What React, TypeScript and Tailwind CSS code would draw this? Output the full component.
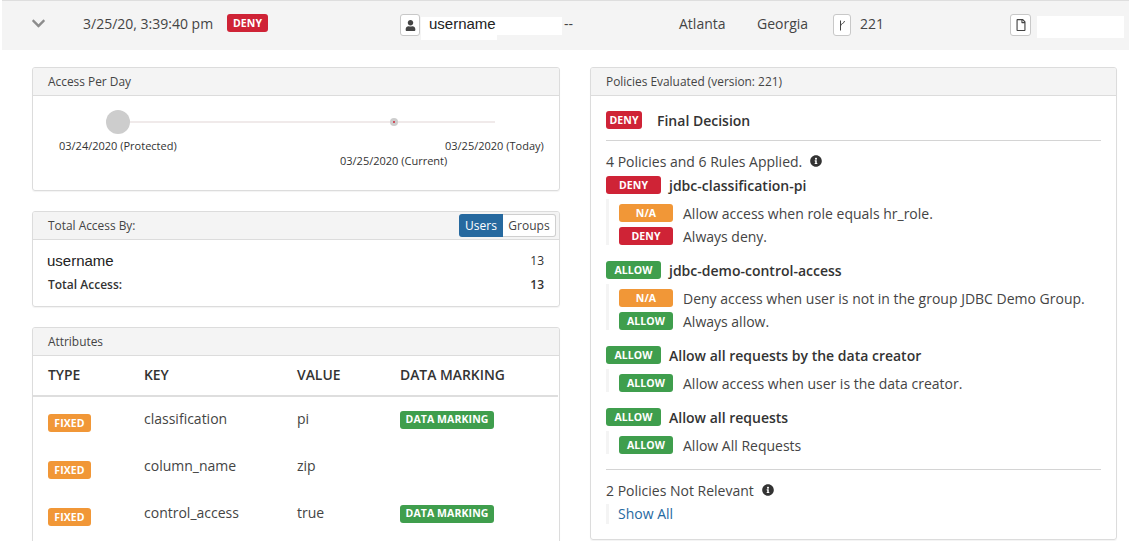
import { FaChevronDown, FaInfoCircle, FaRegFile, FaUser } from "react-icons/fa";

const badgeColors = {
  DENY: "bg-[#cf2336]",
  ALLOW: "bg-[#3f9e4d]",
  "N/A": "bg-[#f19737]",
  FIXED: "bg-[#f19737]",
  "DATA MARKING": "bg-[#3f9e4d]",
};

type BadgeLabel = keyof typeof badgeColors;

const Badge = ({ label, width }: { label: BadgeLabel; width: string }) => (
  <span
    className={`${badgeColors[label]} ${width} flex h-[18px] shrink-0 items-center justify-center rounded-[3px] text-[10.5px] leading-none font-bold tracking-[0.1px] text-white`}
  >
    {label}
  </span>
);

const Panel = ({
  title,
  action,
  className,
  children,
}: {
  title: string;
  action?: React.ReactNode;
  className?: string;
  children: React.ReactNode;
}) => (
  <section
    className={`overflow-hidden rounded-[3px] border border-[#dcdcdc] shadow-[0_1px_1px_rgba(0,0,0,0.05)] ${className ?? ""}`}
  >
    <div className="flex h-[28px] items-center justify-between border-b border-[#dcdcdc] bg-[#f4f4f4] pr-[3px] pl-[15px] text-[11.9px] text-[#444]">
      <span>{title}</span>
      {action}
    </div>
    {children}
  </section>
);

const IconBox = ({ className, children }: { className: string; children: React.ReactNode }) => (
  <span
    className={`mt-[4px] flex h-[22px] items-center justify-center rounded-[3px] border border-[#c8c8c8] bg-white text-[#444] ${className}`}
  >
    {children}
  </span>
);

const Policy = ({ label, name, width }: { label: BadgeLabel; name: string; width: string }) => (
  <div className="flex h-[18px] items-center gap-[8px]">
    <Badge label={label} width={width} />
    <span className="text-[14px] font-semibold text-[#333]">{name}</span>
  </div>
);

const Rules = ({ rules }: { rules: { label: BadgeLabel; text: string }[] }) => (
  <div className="mt-[5px] flex flex-col gap-[5px] border-l-[3px] border-[#f4f4f4] pt-[5px] pl-[10px]">
    {rules.map((rule) => (
      <div key={rule.text} className="flex h-[18px] items-center gap-[10px]">
        <Badge label={rule.label} width="w-[54px]" />
        <span className="text-[14px] text-[#444]">{rule.text}</span>
      </div>
    ))}
  </div>
);

const attributes = [
  { key: "classification", value: "pi", marked: true },
  { key: "column_name", value: "zip", marked: false },
  { key: "control_access", value: "true", marked: true },
];

export default function App() {
  return (
    <div className="h-[541px] w-[1129px] overflow-hidden bg-white font-['Open_Sans',sans-serif] text-[#444]">
      <header className="ml-[2px] flex h-[50px] items-center border-t border-[#dedede] bg-[#f4f4f4] pb-[5px] text-[14px]">
        <FaChevronDown className="ml-[29px] text-[15px] text-[#8c8c8c]" />
        <span className="ml-[37px] w-[144px]">3/25/20, 3:39:40 pm</span>
        <Badge label="DENY" width="w-[41px]" />
        <IconBox className="ml-[132px] w-[20px]">
          <FaUser className="text-[11px]" />
        </IconBox>
        <div className="relative mt-[11px] ml-[1px] h-[23px] w-[141px]">
          <span className="absolute top-0 left-0 h-[23px] w-[76px] bg-white pl-[8px] font-['Liberation_Sans',sans-serif] text-[15px] leading-[14px] text-[#222]">
            username
          </span>
          <span className="absolute top-0 left-[76px] h-[18px] w-[65px] bg-white" />
        </div>
        <span className="ml-[2px] w-[115px]">--</span>
        <span className="w-[78px]">Atlanta</span>
        <span className="w-[76px]">Georgia</span>
        <IconBox className="w-[18px]">
          <svg width="8" height="11" viewBox="0 0 8 11" fill="none" stroke="#444" strokeWidth="1">
            <path d="M2.5 0.5v10M6.5 1c0 2.5-4 2.5-4 5" />
          </svg>
        </IconBox>
        <span className="ml-[9px] w-[150px]">221</span>
        <IconBox className="w-[21px]">
          <FaRegFile className="text-[12px]" />
        </IconBox>
        <span className="mt-[8px] ml-[6px] h-[22px] w-[87px] bg-white" />
      </header>

      <main className="mt-[17px] flex gap-[30px] pl-[32px]">
        <div className="flex w-[528px] flex-col gap-[20px]">
          <Panel title="Access Per Day">
            <div className="relative h-[94px] text-[11px] text-[#333]">
              <span className="absolute top-[25px] left-[85px] h-[2px] w-[377px] bg-[#f0eaea]" />
              <span className="absolute top-[14px] left-[73px] size-[24px] rounded-full bg-[#cdcdcd]" />
              <span className="absolute top-[22px] left-[357px] flex size-[8px] items-center justify-center rounded-full bg-[#cdcdcd]">
                <span className="size-[2px] rounded-full bg-[#cf2336]" />
              </span>
              <span className="absolute top-[42px] left-[26px]">03/24/2020 (Protected)</span>
              <span className="absolute top-[42px] left-[412px]">03/25/2020 (Today)</span>
              <span className="absolute top-[57px] left-[307px]">03/25/2020 (Current)</span>
            </div>
          </Panel>

          <Panel
            title="Total Access By:"
            action={
              <div className="flex h-[23px] text-[12px]">
                <span className="flex w-[44px] items-center justify-center rounded-l-[3px] bg-[#26699f] text-white">
                  Users
                </span>
                <span className="flex w-[53px] items-center justify-center rounded-r-[3px] border border-l-0 border-[#cfcfcf] bg-white">
                  Groups
                </span>
              </div>
            }
          >
            <div className="flex h-[66px] flex-col gap-[4px] pt-[11px] pr-[15px] pl-[14px] text-[12px] text-[#333]">
              <div className="flex h-[20px] items-center justify-between">
                <span className="font-['Liberation_Sans',sans-serif] text-[15px] text-[#222]">username</span>
                <span>13</span>
              </div>
              <div className="flex h-[20px] items-center justify-between pl-[1px] font-semibold">
                <span>Total Access:</span>
                <span>13</span>
              </div>
            </div>
          </Panel>

          <Panel title="Attributes" className="h-[300px]">
            <div className="mr-[1px] grid h-[41px] grid-cols-[96px_153px_103px_1fr] items-center border-b-2 border-[#dedede] pl-[15px] text-[13.9px] font-semibold text-[#333]">
              <span>TYPE</span>
              <span>KEY</span>
              <span>VALUE</span>
              <span>DATA MARKING</span>
            </div>
            {attributes.map((attr) => (
              <div
                key={attr.key}
                className="grid h-[47px] grid-cols-[96px_153px_103px_1fr] items-center pl-[15px] text-[14px] text-[#444]"
              >
                <span className="mt-[5px]">
                  <Badge label="FIXED" width="w-[43px]" />
                </span>
                <span className="-mt-[5px]">{attr.key}</span>
                <span className="-mt-[5px]">{attr.value}</span>
                {attr.marked ? (
                  <span className="mb-[2px]">
                    <Badge label="DATA MARKING" width="w-[94px]" />
                  </span>
                ) : (
                  <span />
                )}
              </div>
            ))}
          </Panel>
        </div>

        <Panel title="Policies Evaluated (version: 221)" className="h-[473px] w-[527px]">
          <div className="px-[15px] pt-[15px]">
            <div className="flex h-[18px] items-center gap-[15px]">
              <Badge label="DENY" width="w-[36px]" />
              <span className="text-[14px] font-semibold text-[#333]">Final Decision</span>
            </div>
            <div className="mt-[11px] border-t border-[#d4d4d4] pt-[10px]">
              <div className="flex h-[20px] items-center gap-[8px] text-[14px]">
                4 Policies and 6 Rules Applied.
                <FaInfoCircle className="text-[12px] text-[#333]" />
              </div>
              <div className="mt-[5px]">
                <Policy label="DENY" name="jdbc-classification-pi" width="w-[55px]" />
                <Rules
                  rules={[
                    { label: "N/A", text: "Allow access when role equals hr_role." },
                    { label: "DENY", text: "Always deny." },
                  ]}
                />
              </div>
              <div className="mt-[16px]">
                <Policy label="ALLOW" name="jdbc-demo-control-access" width="w-[55px]" />
                <Rules
                  rules={[
                    { label: "N/A", text: "Deny access when user is not in the group JDBC Demo Group." },
                    { label: "ALLOW", text: "Always allow." },
                  ]}
                />
              </div>
              <div className="mt-[16px]">
                <Policy label="ALLOW" name="Allow all requests by the data creator" width="w-[55px]" />
                <Rules rules={[{ label: "ALLOW", text: "Allow access when user is the data creator." }]} />
              </div>
              <div className="mt-[16px]">
                <Policy label="ALLOW" name="Allow all requests" width="w-[55px]" />
                <Rules rules={[{ label: "ALLOW", text: "Allow All Requests" }]} />
              </div>
            </div>
            <div className="mt-[15px] border-t border-[#d4d4d4] pt-[10px]">
              <div className="flex h-[20px] items-center gap-[8px] text-[14px]">
                2 Policies Not Relevant
                <FaInfoCircle className="text-[12px] text-[#333]" />
              </div>
              <div className="mt-[4px] border-l-[3px] border-[#f4f4f4] pl-[9px] text-[14px] leading-[20px] text-[#26699f]">
                Show All
              </div>
            </div>
          </div>
        </Panel>
      </main>
    </div>
  );
}
